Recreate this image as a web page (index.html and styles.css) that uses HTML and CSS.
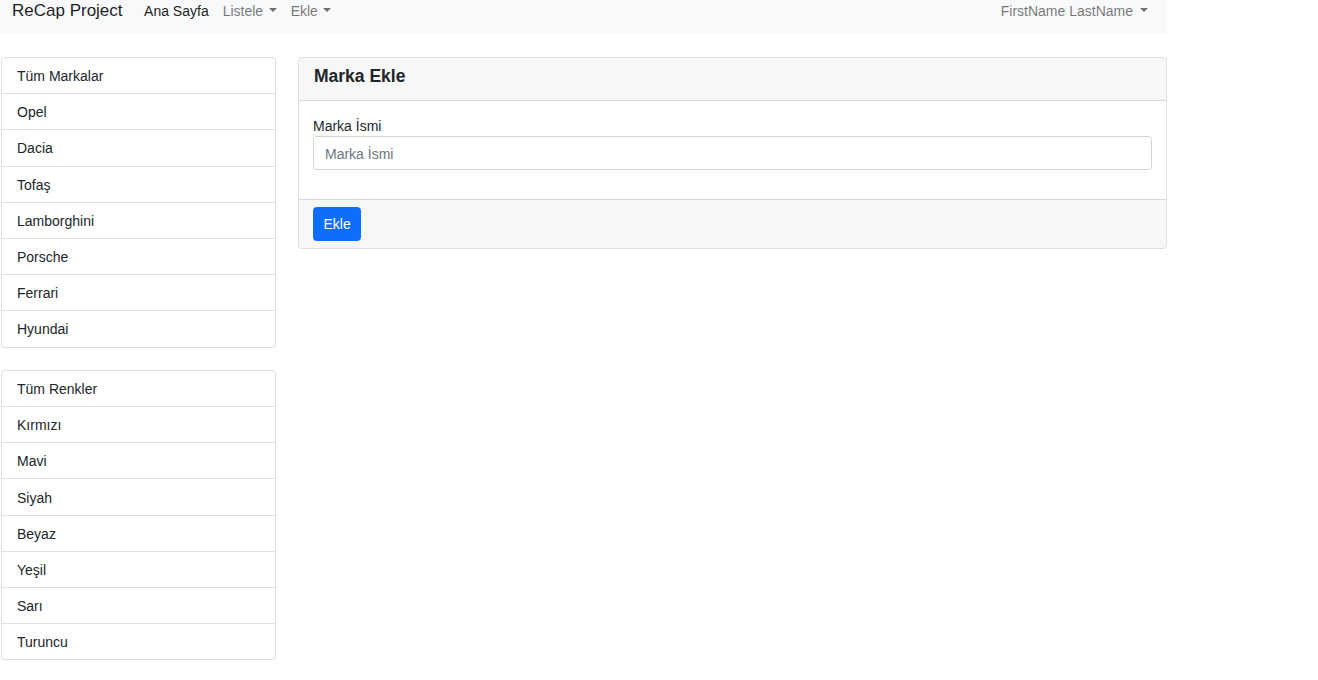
FILE: index.html
```html
<!DOCTYPE html>
<html lang="tr">
<head>
<meta charset="utf-8">
<title>ReCap Project</title>
<link rel="stylesheet" href="styles.css">
</head>
<body>
<nav class="navbar">
  <a class="brand" href="#">ReCap Project</a>
  <ul class="nav">
    <li><a class="nav-link active" href="#">Ana Sayfa</a></li>
    <li><a class="nav-link dropdown" href="#">Listele</a></li>
    <li><a class="nav-link dropdown" href="#">Ekle</a></li>
  </ul>
  <ul class="nav nav-right">
    <li><a class="nav-link dropdown" href="#">FirstName LastName</a></li>
  </ul>
</nav>
<div class="main">
  <aside class="sidebar">
    <ul class="list-group">
      <li class="list-item">Tüm Markalar</li>
      <li class="list-item">Opel</li>
      <li class="list-item">Dacia</li>
      <li class="list-item">Tofaş</li>
      <li class="list-item">Lamborghini</li>
      <li class="list-item">Porsche</li>
      <li class="list-item">Ferrari</li>
      <li class="list-item">Hyundai</li>
    </ul>
    <ul class="list-group">
      <li class="list-item">Tüm Renkler</li>
      <li class="list-item">Kırmızı</li>
      <li class="list-item">Mavi</li>
      <li class="list-item">Siyah</li>
      <li class="list-item">Beyaz</li>
      <li class="list-item">Yeşil</li>
      <li class="list-item">Sarı</li>
      <li class="list-item">Turuncu</li>
    </ul>
  </aside>
  <section class="card">
    <div class="card-header"><h5 class="card-title">Marka Ekle</h5></div>
    <div class="card-body">
      <div class="field">
        <label class="label" for="brandName">Marka İsmi</label>
        <input class="input" id="brandName" type="text" placeholder="Marka İsmi">
      </div>
    </div>
    <div class="card-footer">
      <button class="btn" type="button">Ekle</button>
    </div>
  </section>
</div>
</body>
</html>
```

FILE: styles.css
```css
* { box-sizing: border-box; }
html, body { margin: 0; padding: 0; background: #fff; }
body {
  font-family: "Liberation Sans", Arial, sans-serif;
  font-size: 14px;
  line-height: 21px;
  color: #212529;
}
a { text-decoration: none; }
ul { list-style: none; margin: 0; padding: 0; }

.navbar {
  width: 1167px;
  height: 34px;
  background: #f8f9fa;
  display: flex;
  align-items: flex-start;
  padding: 0 12px;
}
.brand {
  font-size: 17px;
  line-height: 22px;
  color: rgba(0,0,0,.9);
  margin-right: 14.5px;
}
.nav { display: flex; }
.nav-right { margin-left: auto; }
.nav-link {
  display: block;
  padding: 0 7px;
  line-height: 22px;
  font-size: 14px;
  color: rgba(0,0,0,.55);
}
.nav-link.active { color: rgba(0,0,0,.9); }
.dropdown::after {
  content: "";
  display: inline-block;
  margin-left: 5.5px;
  vertical-align: 3.6px;
  border-top: 4.2px solid;
  border-left: 4.2px solid transparent;
  border-right: 4.2px solid transparent;
}
.nav-right .dropdown::after { margin-left: 7px; }

.main {
  display: flex;
  align-items: flex-start;
  gap: 22px;
  padding: 23px 0 0 1px;
  width: 1167px;
}
.sidebar {
  width: 275px;
  display: flex;
  flex-direction: column;
  gap: 22.4px;
}
.list-group {
  border: 1px solid rgba(0,0,0,.125);
  border-radius: 3.5px;
}
.list-item {
  padding: 8.1px 15px 6.1px;
  line-height: 21px;
  color: #212529;
  border-top: 1px solid rgba(0,0,0,.125);
}
.list-item:first-child { border-top: 0; }

.card {
  flex: 1;
  border: 1px solid rgba(0,0,0,.125);
  border-radius: 3.5px;
  overflow: hidden;
}
.card-header {
  background: rgba(0,0,0,.03);
  border-bottom: 1px solid rgba(0,0,0,.125);
  padding: 8px 15px 6px;
}
.card-title {
  margin: 0 0 7px;
  font-size: 17.5px;
  line-height: 21px;
  font-weight: 700;
}
.card-body { padding: 15px 14px 15.5px; }
.field { margin-bottom: 14px; }
.label { display: block; line-height: 20px; }
.input {
  display: block;
  width: 100%;
  height: 33.5px;
  padding: 6.25px 11px 4.25px;
  font-family: inherit;
  font-size: 14px;
  line-height: 21px;
  color: #212529;
  border: 1px solid #ced4da;
  border-radius: 3.5px;
  background: #fff;
}
.input::placeholder { color: #6c757d; }
.card-footer {
  background: rgba(0,0,0,.03);
  border-top: 1px solid rgba(0,0,0,.125);
  padding: 7px 14px;
}
.btn {
  display: block;
  height: 33.5px;
  padding: 6.25px 9.5px 4.25px;
  font-family: inherit;
  font-size: 14px;
  line-height: 21px;
  color: #fff;
  background: #0d6efd;
  border: 1px solid #0d6efd;
  border-radius: 3.5px;
}
```
